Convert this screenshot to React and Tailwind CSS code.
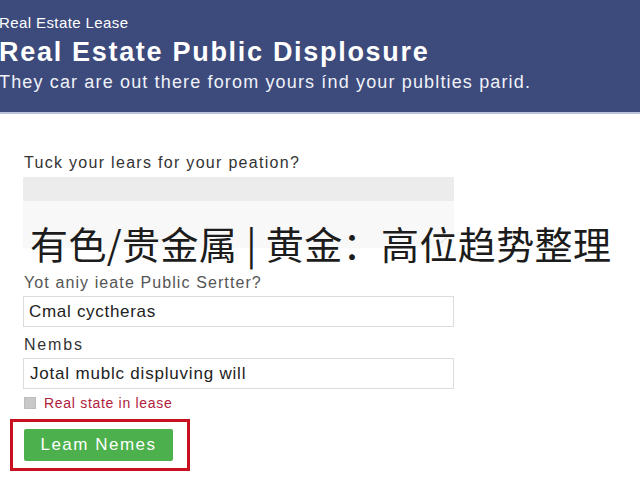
export default function App() {
  const sans = { fontFamily: '"Liberation Sans", Arial, sans-serif' };
  return (
    <div className="relative w-[640px] h-[480px] overflow-hidden bg-white" style={sans}>
      <header className="h-[114px] bg-[#3c4a7c] border-b-2 border-[#bcc4dc] text-white">
        <div className="pt-[14px] -ml-[1px]">
          <div className="text-[15px] leading-[18px] tracking-[0.4px]">Real Estate Lease</div>
          <h1 className="mt-[5px] text-[27px] leading-[30px] font-bold tracking-[1.7px]">Real Estate Public Displosure</h1>
          <p className="mt-[4px] text-[18px] leading-[22px] tracking-[1.15px] text-[#f0f2f8]">
            They car are out there forom yours índ your publties parid.
          </p>
        </div>
      </header>

      <main className="pl-[23px] pt-[40px] w-[454px]">
        <label className="block pl-[1px] text-[16px] leading-[18px] tracking-[1.3px] text-[#333]">
          Tuck your lears for your peation?
        </label>
        <div className="relative mt-[5px] h-[71px]">
          <div className="h-[24px] bg-[#ececec]"></div>
          <div className="h-[47px] bg-[#f8f8f8]"></div>
          <svg className="absolute right-[4px] bottom-[4px]" width="10" height="10" viewBox="0 0 10 10">
            <path d="M1 9 L9 1" stroke="#d8d8d8" strokeWidth="1" />
          </svg>
        </div>

        <label className="block mt-[26px] pl-[1px] text-[16px] leading-[18px] tracking-[1.1px] text-[#555]">
          Yot aniy ieate Public Sertter?
        </label>
        <div className="mt-[4px] h-[31px] border border-[#dcdcdc] flex items-center pl-[5px] text-[17px] tracking-[0.7px] text-[#222]">
          Cmal cyctheras
        </div>
        <label className="block mt-[9px] pl-[1px] text-[16px] leading-[18px] tracking-[1.8px] text-[#333]">
          Nembs
        </label>
        <div className="mt-[4px] h-[31px] border border-[#dcdcdc] flex items-center pl-[6px] text-[17px] tracking-[0.8px] text-[#222]">
          Jotal mublc displuving will
        </div>
        <div className="mt-[6px] flex items-center gap-[8px] pl-[1px]">
          <span className="w-[12px] h-[12px] bg-[#c8c8c8] border border-[#bdbdbd]"></span>
          <span className="text-[14px] leading-[16px] tracking-[0.7px] text-[#b0213d]">Real state in lease</span>
        </div>
      </main>

      <div className="mt-[8px] ml-[10px] w-[180px] h-[52px] border-[3px] border-[#c8101e] flex items-center pl-[11px]">
        <button className="w-[149px] h-[32px] bg-[#4cb04c] rounded-[2px] text-white text-[17px] leading-[20px] tracking-[1.5px]" style={sans}>
          Leam Nemes
        </button>
      </div>

      <div className="absolute left-0 top-[248px] w-[640px] h-[26px] bg-white"></div>
      <div
        className="absolute left-[30px] top-[217px] text-[38px] leading-[52px] tracking-[0.4px] text-[#1c1c1c] whitespace-nowrap"
        style={{ fontFamily: '"Noto Sans CJK SC", "Noto Sans", sans-serif' }}
      >
        有色/贵金属 | 黄金：高位趋势整理
      </div>
    </div>
  );
}
